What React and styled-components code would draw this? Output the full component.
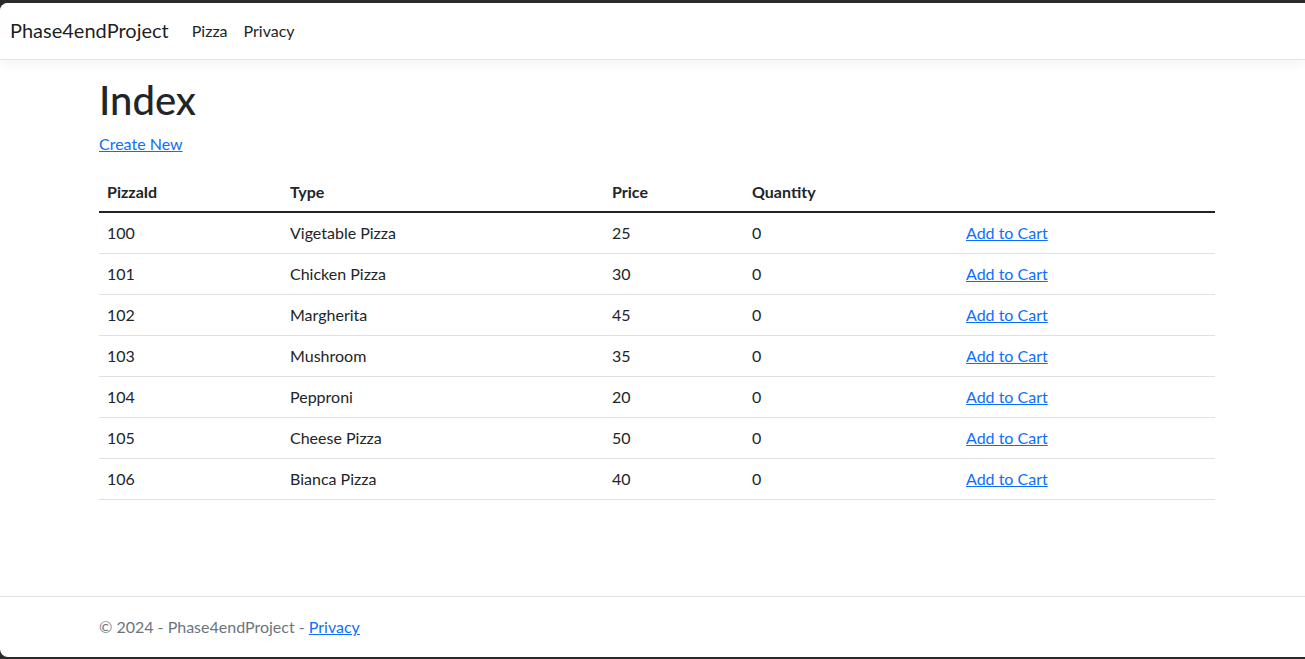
import React from "react";
import styled, { createGlobalStyle } from "styled-components";

const pizzas = [
  { id: 100, type: "Vigetable Pizza", price: 25, qty: 0 },
  { id: 101, type: "Chicken Pizza", price: 30, qty: 0 },
  { id: 102, type: "Margherita", price: 45, qty: 0 },
  { id: 103, type: "Mushroom", price: 35, qty: 0 },
  { id: 104, type: "Pepproni", price: 20, qty: 0 },
  { id: 105, type: "Cheese Pizza", price: 50, qty: 0 },
  { id: 106, type: "Bianca Pizza", price: 40, qty: 0 },
];

const GlobalStyle = createGlobalStyle`
  *, *::before, *::after {
    box-sizing: border-box;
  }
  html, body {
    margin: 0;
    padding: 0;
    background: #2b2b2b;
  }
  body {
    font-family: Lato, "Open Sans", "Liberation Sans", sans-serif;
    font-size: 16px;
    line-height: 1.5;
    color: #212529;
  }
`;

const Window = styled.div`
  margin-top: 3px;
  height: 654px;
  background: #fff;
  border-radius: 8px 0 0 8px;
  overflow: hidden;
  display: flex;
  flex-direction: column;
`;

const Navbar = styled.header`
  height: 57px;
  flex-shrink: 0;
  display: flex;
  align-items: center;
  padding: 0 10px;
  background: #fff;
  border-bottom: 1px solid #e5e5e5;
  box-shadow: 0 4px 12px rgba(0, 0, 0, 0.05);
`;

const Brand = styled.a`
  font-size: 20px;
  color: rgba(0, 0, 0, 0.9);
  text-decoration: none;
  margin-right: 15px;
  margin-top: -2px;
`;

const NavLink = styled.a`
  font-size: 16px;
  color: #212529;
  text-decoration: none;
  padding: 8px;
`;

const Main = styled.main`
  flex: 1;
  width: 1116px;
  margin-left: 99px;
  padding-top: 16px;
`;

const Title = styled.h1`
  margin: 0 0 8px;
  font-size: 40px;
  font-weight: 500;
  line-height: 1.2;
`;

const Link = styled.a`
  color: #0d6efd;
  text-decoration: underline;
`;

const CreateRow = styled.p`
  margin: 0 0 16px;
`;

const Table = styled.table`
  width: 100%;
  table-layout: fixed;
  border-collapse: collapse;
  margin-top: 8px;
`;

const Th = styled.th`
  text-align: left;
  font-weight: 700;
  padding: 8px 8px 7px;
  width: ${(p) => p.$w}px;
  border-bottom: 2px solid #212529;
`;

const Td = styled.td`
  padding: 8px;
  border-bottom: 1px solid #dee2e6;
`;

const Footer = styled.footer`
  height: 61px;
  flex-shrink: 0;
  border-top: 1px solid #dee2e6;
  display: flex;
  align-items: center;
  padding-left: 99px;
  color: #6c757d;
  font-size: 16px;
`;

export default function App() {
  return (
    <>
      <GlobalStyle />
      <Window>
        <Navbar>
          <Brand href="#">Phase4endProject</Brand>
          <NavLink href="#">Pizza</NavLink>
          <NavLink href="#">Privacy</NavLink>
        </Navbar>
        <Main>
          <Title>Index</Title>
          <CreateRow>
            <Link href="#">Create New</Link>
          </CreateRow>
          <Table>
            <thead>
              <tr>
                <Th $w={183}>PizzaId</Th>
                <Th $w={322}>Type</Th>
                <Th $w={140}>Price</Th>
                <Th $w={214}>Quantity</Th>
                <Th $w={257} />
              </tr>
            </thead>
            <tbody>
              {pizzas.map((p) => (
                <tr key={p.id}>
                  <Td>{p.id}</Td>
                  <Td>{p.type}</Td>
                  <Td>{p.price}</Td>
                  <Td>{p.qty}</Td>
                  <Td>
                    <Link href="#">Add to Cart</Link>
                  </Td>
                </tr>
              ))}
            </tbody>
          </Table>
        </Main>
        <Footer>
          <span>
            © 2024 - Phase4endProject - <Link href="#">Privacy</Link>
          </span>
        </Footer>
      </Window>
    </>
  );
}
